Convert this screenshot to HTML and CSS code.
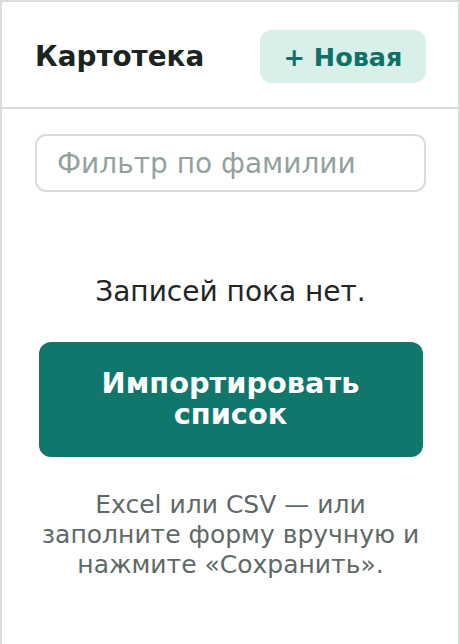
FILE: index.html
```html
<!DOCTYPE html>
<html lang="ru">
<head>
<meta charset="utf-8">
<title>Картотека</title>
<link rel="stylesheet" href="styles.css">
</head>
<body>
<div class="app">
  <header class="header">
    <h1 class="title">Картотека</h1>
    <button class="btn-new" type="button">+ Новая</button>
  </header>
  <main class="content">
    <input class="filter" type="text" placeholder="Фильтр по фамилии">
    <div class="empty">
      <p class="empty-text">Записей пока нет.</p>
      <button class="btn-import" type="button">Импортировать<br>список</button>
      <p class="hint">Excel или CSV — или<br>заполните форму вручную и<br>нажмите «Сохранить».</p>
    </div>
  </main>
</div>
</body>
</html>
```
FILE: styles.css
```css
* { box-sizing: border-box; }
html, body { margin: 0; padding: 0; background: #ffffff; }
body { font-family: "DejaVu Sans", sans-serif; }

.app {
  width: 460px;
  min-height: 700px;
  border: 2px solid #d8ded9;
  border-bottom: none;
  background: #ffffff;
}

.header {
  display: flex;
  align-items: center;
  justify-content: space-between;
  padding: 28px 32px 24px 33px;
  border-bottom: 2px solid #d8ded9;
}

.title {
  margin: 0;
  font-size: 27.8px;
  font-weight: bold;
  color: #1a2420;
  line-height: 32px;
}

.btn-new {
  height: 53px;
  width: 166px;
  border: none;
  border-radius: 12px;
  background: #d9efe9;
  color: #0f7066;
  font-family: "DejaVu Sans", sans-serif;
  font-size: 25.5px;
  font-weight: bold;
  padding: 0;
}

.content {
  padding: 25px 32px 0 33px;
}

.filter {
  display: block;
  width: 100%;
  height: 58px;
  border: 2px solid #d8ddd8;
  border-radius: 11px;
  padding: 0 20px;
  font-family: "DejaVu Sans", sans-serif;
  font-size: 28px;
  color: #1d2421;
  outline: none;
}
.filter::placeholder { color: #93a39c; }

.empty {
  display: flex;
  flex-direction: column;
  align-items: center;
  text-align: center;
}

.empty-text {
  margin: 83px 0 0;
  font-size: 28px;
  line-height: 34px;
  color: #222624;
}

.btn-import {
  margin-top: 33px;
  width: 384px;
  padding: 26px 10px 27px;
  border: none;
  border-radius: 12px;
  background: #11766c;
  color: #ffffff;
  font-family: "DejaVu Sans", sans-serif;
  font-size: 28.8px;
  font-weight: bold;
  line-height: 31px;
}

.hint {
  margin: 33px 0 0;
  font-size: 25px;
  line-height: 30px;
  color: #5e6a65;
}
```
